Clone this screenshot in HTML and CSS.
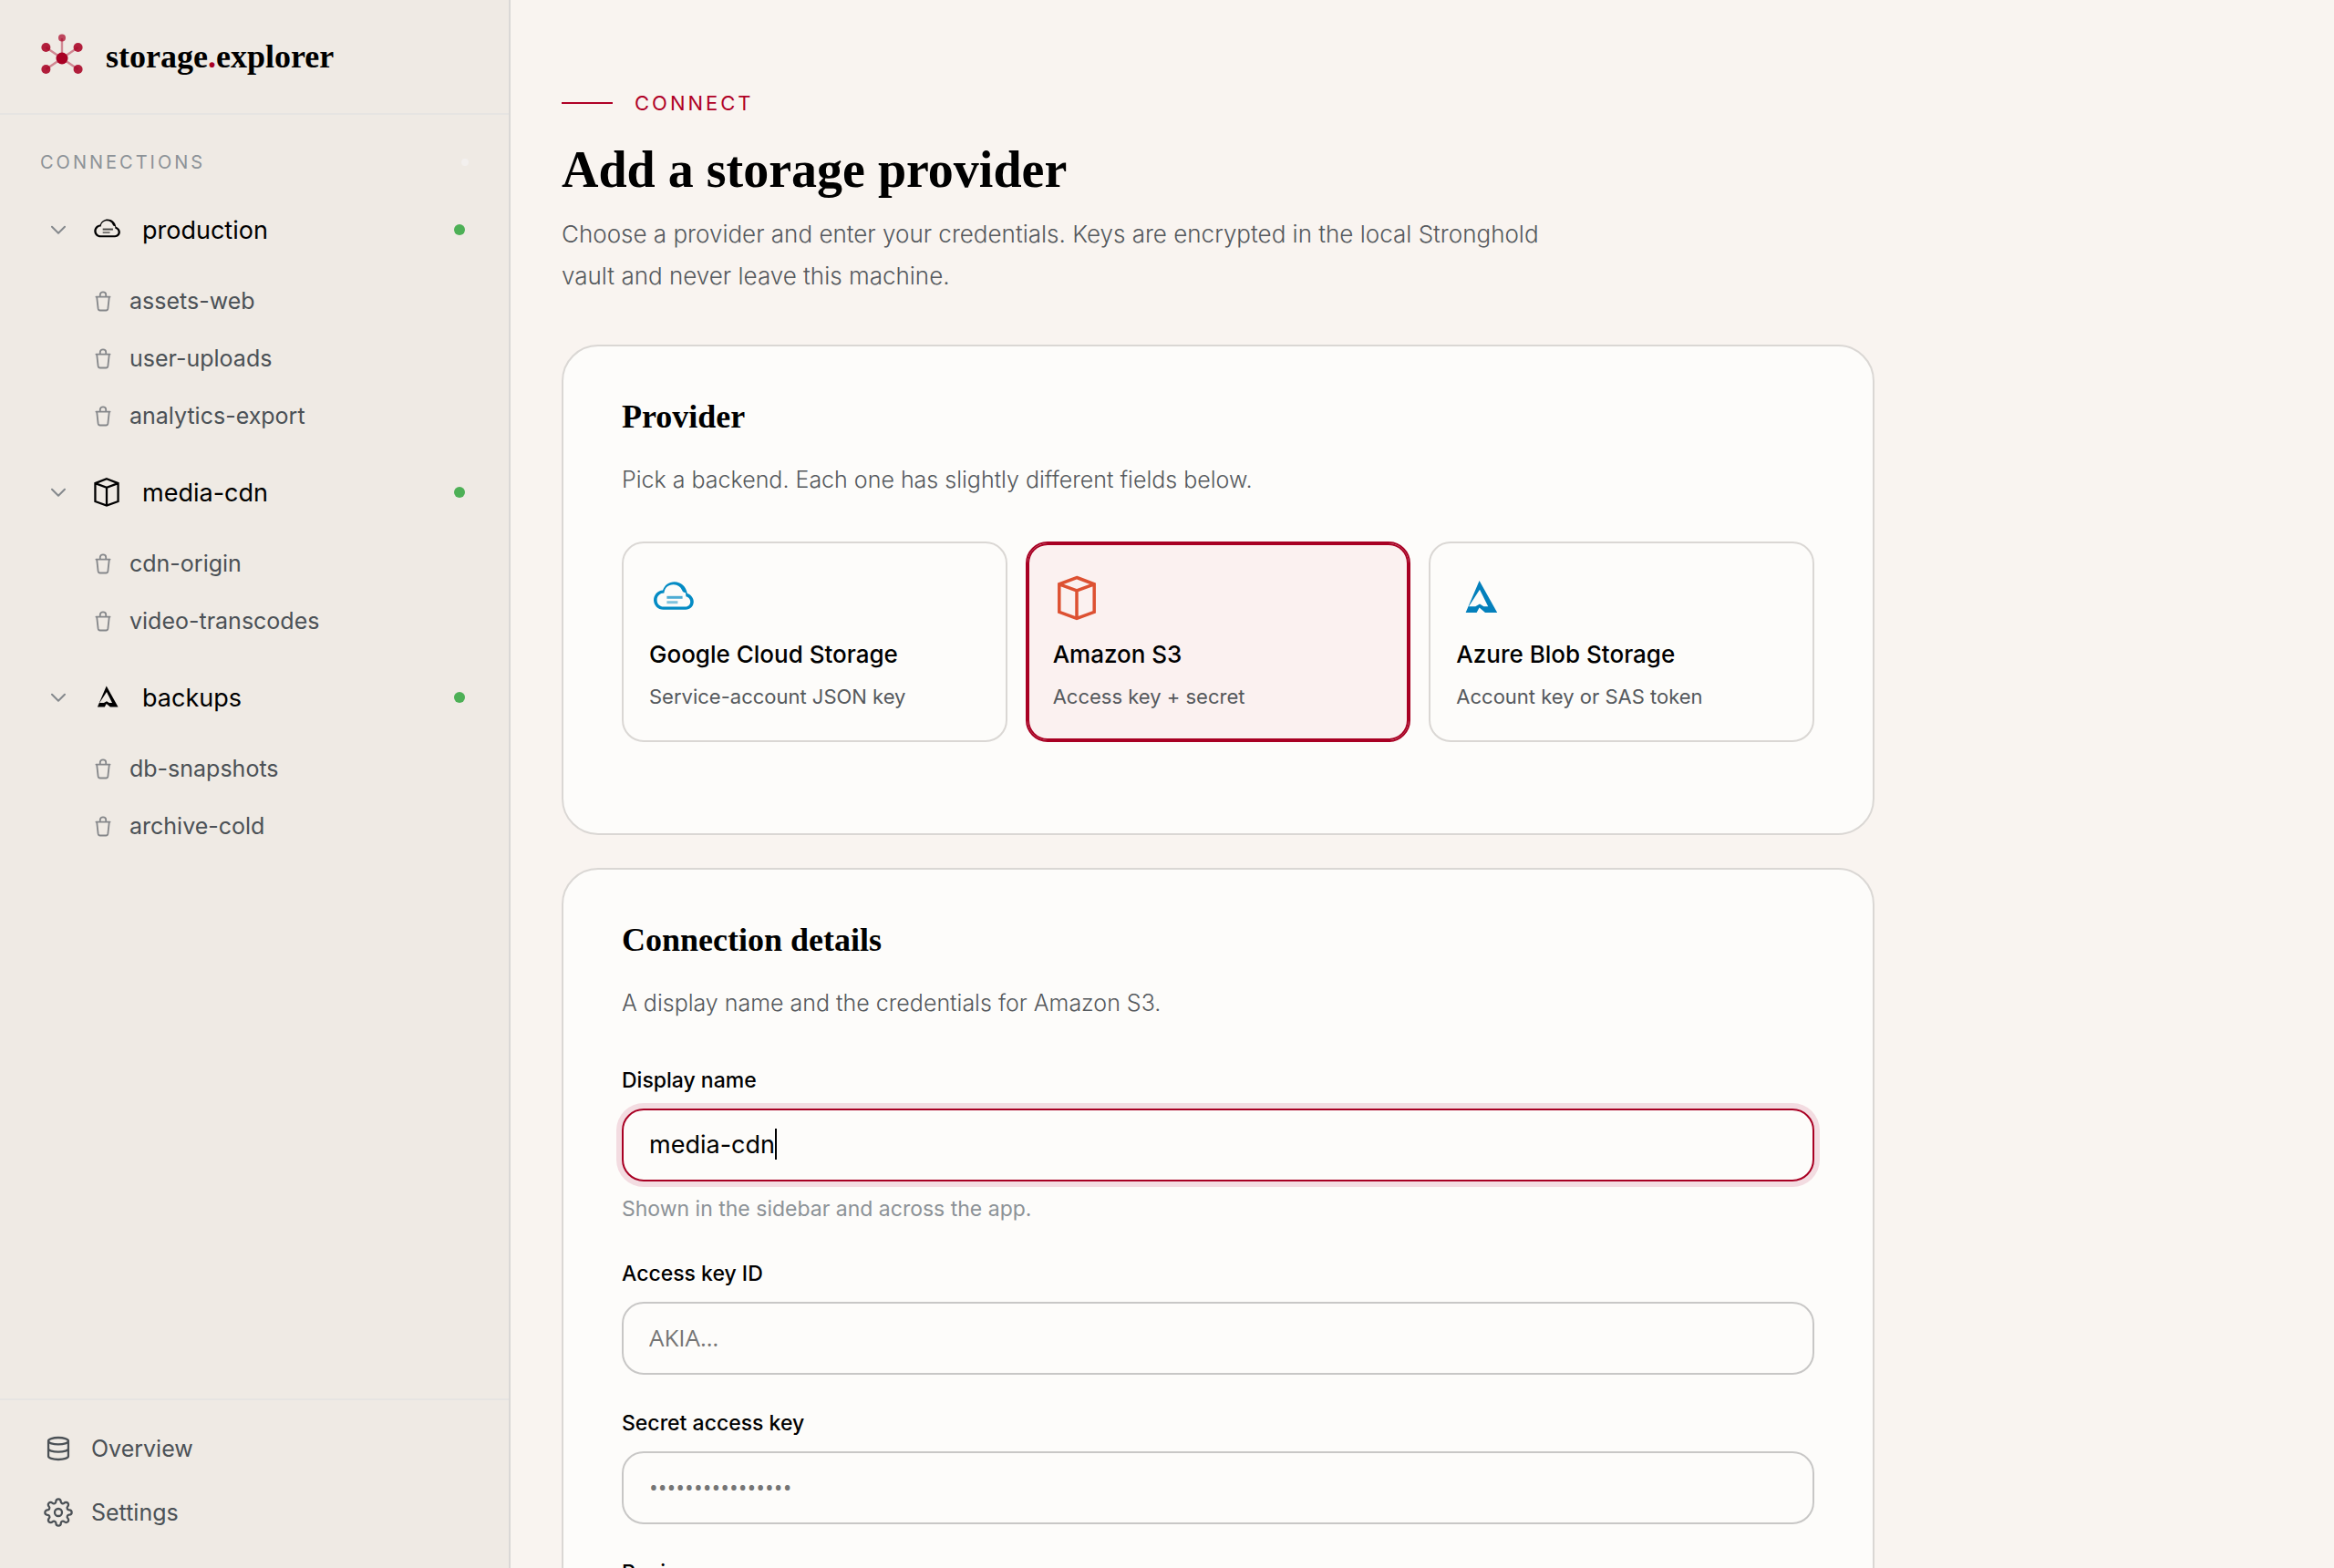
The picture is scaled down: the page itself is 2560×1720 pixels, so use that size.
FILE: index.html
```html
<!DOCTYPE html>
<html lang="en">
<head>
<meta charset="utf-8">
<meta name="viewport" content="width=device-width, initial-scale=1">
<title>storage.explorer</title>
<link rel="stylesheet" href="styles.css">
</head>
<body>
<svg class="sprite" aria-hidden="true">
  <symbol id="i-cloud" viewBox="0 0 52 52">
    <path fill="currentColor" fill-rule="evenodd" d="M15 17.4C17 12 21.5 8.3 27.8 8.3C34.8 8.3 40.6 13.2 41.8 21C45.8 22.3 48.8 25.8 48.8 30C48.8 35 45 38.7 40 38.7H15.5C9.6 38.7 5 34 5 28.2C5 22.4 9.4 17.8 15 17.4ZM16.4 20.6C12 20.6 8.6 23.8 8.6 28.2C8.6 32.4 11.8 35.5 15.8 35.5H40C43 35.5 45.2 33 45.2 30C45.2 27 43 24.8 40.4 24.2L40 20.2C38.4 20.2 36.8 19.4 36 17.2C34.4 13.6 31.4 11.4 27 11.2C21 11 17 14.6 16.4 20.6Z"/>
    <path stroke="currentColor" stroke-width="3" opacity=".7" d="M19.4 25.3H36.6"/>
    <path stroke="currentColor" stroke-width="3" opacity=".5" d="M19.4 30.7H31.4"/>
  </symbol>
  <symbol id="i-cube" viewBox="0 0 52 52">
    <path fill="none" stroke="currentColor" stroke-width="3.5" d="M26 3.5L45.2 10.8V41.4L26 48.4L6.8 41.4V10.8ZM6.8 10.8L26 18L45.2 10.8M26 18V48.4"/>
  </symbol>
  <symbol id="i-azure" viewBox="0 0 52 52">
    <path fill="currentColor" fill-rule="evenodd" d="M25.6 7L45.2 42H32L25.6 36.6L22.6 42H10.6ZM26 16.7L14 35.3H21.3L26 32.4L30.4 35.3H35.2Z"/>
  </symbol>
  <symbol id="i-chevron" viewBox="0 0 24 24">
    <path fill="none" stroke="currentColor" stroke-width="2" stroke-linecap="round" stroke-linejoin="round" d="M5 8.7L12 15.7L19 8.7"/>
  </symbol>
  <symbol id="i-bucket" viewBox="0 0 26 26">
    <path fill="none" stroke="currentColor" stroke-width="1.8" stroke-linecap="round" stroke-linejoin="round" d="M5.4 8.6H20.6M9.8 8.6V6.2C9.8 4.6 11 3.4 13 3.4S16.2 4.6 16.2 6.2V8.6M6.2 8.6L7.6 21.4C7.8 22.9 8.4 23.5 9.8 23.5H16.2C17.6 23.5 18.2 22.9 18.4 21.4L19.8 8.6"/>
  </symbol>
</svg>

<div class="app">
  <aside class="sidebar">
    <header class="brand">
      <svg class="brand-mark" viewBox="0 0 48 48" aria-hidden="true">
        <g stroke="#a80023" stroke-width="2.4" opacity=".42"><path d="M24 26V4M24 26L6.4 14M24 26L41.6 14M24 26L6.4 38M24 26L41.6 38"/></g>
        <g fill="#a80023"><circle cx="24" cy="26" r="6.5"/><circle cx="24" cy="3.6" r="4" opacity=".7"/><g opacity=".87"><circle cx="6.4" cy="14" r="5"/><circle cx="41.6" cy="14" r="5"/><circle cx="6.4" cy="38" r="5"/><circle cx="41.6" cy="38" r="5"/></g></g>
      </svg>
      <span class="brand-name">storage<span class="brand-dot">.</span>explorer</span>
    </header>

    <nav class="connections" aria-label="Connections">
      <div class="section-head">
        <h2 class="section-title">CONNECTIONS</h2>
        <button class="section-action" type="button" aria-label="Add connection"></button>
      </div>

      <section class="group">
        <button class="connection" type="button">
          <svg class="chevron"><use href="#i-chevron"/></svg>
          <svg class="provider-icon"><use href="#i-cloud"/></svg>
          <span class="connection-name">production</span>
          <span class="status"></span>
        </button>
        <div class="buckets">
          <a class="bucket" href="#assets-web"><svg class="bucket-icon"><use href="#i-bucket"/></svg>assets-web</a>
          <a class="bucket" href="#user-uploads"><svg class="bucket-icon"><use href="#i-bucket"/></svg>user-uploads</a>
          <a class="bucket" href="#analytics-export"><svg class="bucket-icon"><use href="#i-bucket"/></svg>analytics-export</a>
        </div>
      </section>

      <section class="group">
        <button class="connection" type="button">
          <svg class="chevron"><use href="#i-chevron"/></svg>
          <svg class="provider-icon"><use href="#i-cube"/></svg>
          <span class="connection-name">media-cdn</span>
          <span class="status"></span>
        </button>
        <div class="buckets">
          <a class="bucket" href="#cdn-origin"><svg class="bucket-icon"><use href="#i-bucket"/></svg>cdn-origin</a>
          <a class="bucket" href="#video-transcodes"><svg class="bucket-icon"><use href="#i-bucket"/></svg>video-transcodes</a>
        </div>
      </section>

      <section class="group">
        <button class="connection" type="button">
          <svg class="chevron"><use href="#i-chevron"/></svg>
          <svg class="provider-icon"><use href="#i-azure"/></svg>
          <span class="connection-name">backups</span>
          <span class="status"></span>
        </button>
        <div class="buckets">
          <a class="bucket" href="#db-snapshots"><svg class="bucket-icon"><use href="#i-bucket"/></svg>db-snapshots</a>
          <a class="bucket" href="#archive-cold"><svg class="bucket-icon"><use href="#i-bucket"/></svg>archive-cold</a>
        </div>
      </section>
    </nav>

    <footer class="sidebar-footer">
      <a class="footer-link" href="#overview">
        <svg class="footer-icon" viewBox="0 0 24 24"><ellipse cx="12" cy="5.8" rx="8.2" ry="2.8"/><path d="M3.8 5.8V18.2C3.8 19.8 7.4 21 12 21S20.2 19.8 20.2 18.2V5.8M3.8 12C3.8 13.6 7.4 14.8 12 14.8S20.2 13.6 20.2 12"/></svg>
        Overview
      </a>
      <a class="footer-link" href="#settings">
        <svg class="footer-icon" viewBox="0 0 24 24"><circle cx="12" cy="12" r="3"/><path d="M19.4 15a1.65 1.65 0 0 0 .33 1.82l.06.06a2 2 0 0 1 0 2.83 2 2 0 0 1-2.83 0l-.06-.06a1.65 1.65 0 0 0-1.82-.33 1.65 1.65 0 0 0-1 1.51V21a2 2 0 0 1-2 2 2 2 0 0 1-2-2v-.09A1.65 1.65 0 0 0 9 19.4a1.65 1.65 0 0 0-1.82.33l-.06.06a2 2 0 0 1-2.83 0 2 2 0 0 1 0-2.83l.06-.06a1.65 1.65 0 0 0 .33-1.82 1.65 1.65 0 0 0-1.51-1H3a2 2 0 0 1-2-2 2 2 0 0 1 2-2h.09A1.65 1.65 0 0 0 4.6 9a1.65 1.65 0 0 0-.33-1.82l-.06-.06a2 2 0 0 1 0-2.83 2 2 0 0 1 2.83 0l.06.06a1.65 1.65 0 0 0 1.82.33H9a1.65 1.65 0 0 0 1-1.51V3a2 2 0 0 1 2-2 2 2 0 0 1 2 2v.09a1.65 1.65 0 0 0 1 1.51 1.65 1.65 0 0 0 1.82-.33l.06-.06a2 2 0 0 1 2.83 0 2 2 0 0 1 0 2.83l-.06.06a1.65 1.65 0 0 0-.33 1.82V9a1.65 1.65 0 0 0 1.51 1H21a2 2 0 0 1 2 2 2 2 0 0 1-2 2h-.09a1.65 1.65 0 0 0-1.51 1z"/></svg>
        Settings
      </a>
    </footer>
  </aside>

  <main class="main">
    <div class="page">
      <header class="page-head">
        <p class="eyebrow">CONNECT</p>
        <h1 class="page-title">Add a storage provider</h1>
        <p class="page-lead">Choose a provider and enter your credentials. Keys are encrypted in the local Stronghold vault and never leave this machine.</p>
      </header>

      <section class="card">
        <h2 class="card-title">Provider</h2>
        <p class="card-text">Pick a backend. Each one has slightly different fields below.</p>
        <div class="providers">
          <button class="provider" type="button" aria-pressed="false">
            <svg class="provider-logo logo-gcs"><use href="#i-cloud"/></svg>
            <span class="provider-name">Google Cloud Storage</span>
            <span class="provider-text">Service-account JSON key</span>
          </button>
          <button class="provider selected" type="button" aria-pressed="true">
            <svg class="provider-logo logo-s3"><use href="#i-cube"/></svg>
            <span class="provider-name">Amazon S3</span>
            <span class="provider-text">Access key + secret</span>
          </button>
          <button class="provider" type="button" aria-pressed="false">
            <svg class="provider-logo logo-azure"><use href="#i-azure"/></svg>
            <span class="provider-name">Azure Blob Storage</span>
            <span class="provider-text">Account key or SAS token</span>
          </button>
        </div>
      </section>

      <section class="card">
        <h2 class="card-title">Connection details</h2>
        <p class="card-text">A display name and the credentials for Amazon S3.</p>
        <form class="form">
          <div class="field">
            <label class="label" for="display-name">Display name</label>
            <div class="control">
              <input class="input active" id="display-name" type="text" value="media-cdn">
              <span class="caret"></span>
            </div>
            <p class="help">Shown in the sidebar and across the app.</p>
          </div>
          <div class="field">
            <label class="label" for="access-key">Access key ID</label>
            <input class="input" id="access-key" type="text" placeholder="AKIA…">
          </div>
          <div class="field">
            <label class="label" for="secret-key">Secret access key</label>
            <input class="input" id="secret-key" type="password" placeholder="••••••••••••••••">
          </div>
          <div class="field">
            <label class="label" for="region">Region</label>
            <select class="input" id="region"></select>
          </div>
        </form>
      </section>
    </div>
  </main>
</div>
</body>
</html>
```

FILE: styles.css
```css
:root {
  --red: #a80023;
  --black: #000;
  --gray: #55595d;
  --muted: #8c9297;
  --line: #dad7d4;
  --sans: Inter, "Liberation Sans", sans-serif;
  --serif: "Liberation Serif", "Times New Roman", serif;
}

* { box-sizing: border-box; }

body {
  margin: 0;
  background: #f9f4f0;
  color: var(--black);
  font-family: var(--sans);
}

h1, h2, p { margin: 0; }

a { color: inherit; text-decoration: none; }

button {
  margin: 0;
  padding: 0;
  border: 0;
  background: none;
  color: inherit;
  font: inherit;
  text-align: left;
}

.sprite { position: absolute; width: 0; height: 0; }

.app {
  display: flex;
  height: 100vh;
  overflow: hidden;
}

/* Sidebar */

.sidebar {
  display: flex;
  flex: none;
  flex-direction: column;
  width: 560px;
  border-right: 2px solid #dad8d6;
  background: #efeae4;
}

.brand {
  display: flex;
  align-items: center;
  gap: 24px;
  padding: 38px 44px;
  border-bottom: 2px solid #e6e4e2;
}

.brand-mark { width: 48px; height: 48px; overflow: visible; }

.brand-name {
  font: bold 36px/48px var(--serif);
}

.brand-dot { color: var(--red); }

.connections {
  flex: 1;
  min-height: 0;
  overflow: hidden;
  padding-top: 28px;
}

.section-head {
  display: flex;
  align-items: center;
  justify-content: space-between;
  height: 48px;
  margin-bottom: 20px;
  padding: 0 44px;
}

.section-title {
  color: var(--muted);
  font-size: 20px;
  font-weight: 400;
  letter-spacing: 3px;
}

.section-action {
  width: 8px;
  height: 8px;
  border-radius: 50%;
  background: #f3f0ee;
}

.group { margin-bottom: 24px; }

.connection {
  display: flex;
  align-items: center;
  width: 100%;
  height: 60px;
  padding: 0 48px 0 52px;
  font-size: 27px;
}

.chevron {
  width: 24px;
  height: 24px;
  margin-right: 24px;
  color: #85898d;
}

.provider-icon {
  width: 34px;
  height: 34px;
  margin-right: 22px;
}

.connection-name { flex: 1; }

.status {
  width: 12px;
  height: 12px;
  border-radius: 50%;
  background: #4db056;
}

.buckets {
  display: flex;
  flex-direction: column;
  gap: 2px;
  margin-top: 17px;
}

.bucket {
  display: flex;
  align-items: center;
  gap: 16px;
  height: 61px;
  padding-left: 100px;
  color: #4b5156;
  font-size: 25px;
}

.bucket-icon { width: 26px; height: 26px; color: #85878a; }

.sidebar-footer {
  display: flex;
  flex-direction: column;
  gap: 2px;
  padding: 19px 48px 27px;
  border-top: 2px solid #e6e4e2;
}

.footer-link {
  display: flex;
  align-items: center;
  gap: 20px;
  height: 68px;
  color: #4b5156;
  font-size: 25px;
}

.footer-icon {
  width: 32px;
  height: 32px;
  overflow: visible;
  fill: none;
  stroke: currentColor;
  stroke-width: 1.7;
  stroke-linecap: round;
  stroke-linejoin: round;
}

/* Main column */

.main {
  flex: 1;
  min-width: 0;
  overflow: hidden;
  padding: 96px 56px;
}

.page { max-width: 1440px; }

.page-head { margin-bottom: 52px; }

.eyebrow {
  display: flex;
  align-items: center;
  gap: 24px;
  color: #b00026;
  font-size: 22px;
  line-height: 34px;
  letter-spacing: 3px;
}

.eyebrow::before {
  content: "";
  width: 56px;
  height: 2px;
  background: #b00026;
}

.page-title {
  margin-top: 24px;
  font: bold 56px/64px var(--serif);
}

.page-lead {
  max-width: 1100px;
  margin-top: 16px;
  color: var(--gray);
  font-size: 26px;
  font-weight: 300;
  line-height: 46px;
}

.card {
  margin-bottom: 36px;
  padding: 56px 64px;
  border: 2px solid var(--line);
  border-radius: 40px;
  background: #fdfcfa;
}

.card-title { font: bold 36px/42px var(--serif); }

.card-text {
  margin: 26px 0 46px;
  color: var(--gray);
  font-size: 25px;
  font-weight: 300;
  line-height: 44px;
}

.providers {
  display: grid;
  grid-template-columns: repeat(3, 1fr);
  gap: 20px;
  margin-bottom: 44px;
}

.provider {
  display: flex;
  flex-direction: column;
  padding: 34px 28px 32px;
  border: 2px solid var(--line);
  border-radius: 24px;
}

.provider.selected {
  border-color: var(--red);
  background: #fbf1f0;
  box-shadow: inset 0 0 0 2px var(--red);
}

.provider-logo {
  width: 52px;
  height: 52px;
  margin-bottom: 16px;
}

.logo-gcs { color: #048bc4; }
.logo-s3 { color: #dd5132; }
.logo-azure { color: #0480bc; }

.provider-name {
  margin-bottom: 10px;
  font-size: 26px;
  font-weight: 500;
  line-height: 40px;
}

.provider-text {
  color: var(--gray);
  font-size: 22px;
  line-height: 32px;
}

.form {
  display: flex;
  flex-direction: column;
  gap: 36px;
}

.field {
  display: flex;
  flex-direction: column;
}

.label {
  margin-bottom: 14px;
  font-size: 23px;
  font-weight: 500;
  line-height: 34px;
}

.control { position: relative; }

.input {
  display: block;
  width: 100%;
  height: 80px;
  padding: 0 28px 2px;
  border: 2px solid #c8c7c6;
  border-radius: 24px;
  outline: none;
  background: #fdfcfa;
  color: var(--black);
  font: 27px/40px var(--sans);
}

.input::placeholder {
  color: #757575;
  font: 26px/40px "Open Sans", sans-serif;
}

.input.active {
  border-color: var(--red);
  box-shadow: 0 0 0 6px #f3dce1;
  caret-color: transparent;
}

.caret {
  position: absolute;
  top: 22px;
  left: 168px;
  width: 2px;
  height: 34px;
  background: var(--black);
}

.help {
  margin-top: 12px;
  color: var(--muted);
  font-size: 23px;
  line-height: 36px;
}
```
